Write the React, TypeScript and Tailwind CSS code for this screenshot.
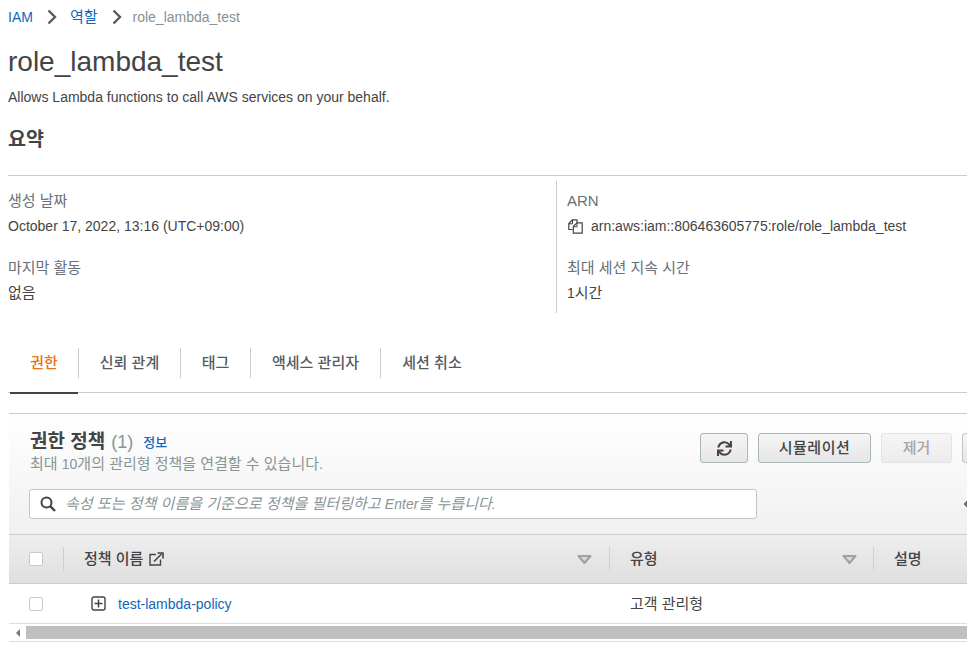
import React from 'react';
import { FaSync } from 'react-icons/fa';

const font = 'font-["Liberation_Sans","Noto_Sans_CJK_KR",sans-serif]';

const Chevron = () => (
  <svg width="10" height="16" viewBox="0 0 10 16" className="shrink-0">
    <path d="M1.5 1.5 L8 8 L1.5 14.5" fill="none" stroke="#545b64" strokeWidth="2.4" />
  </svg>
);

const SortArrow = () => (
  <svg width="15" height="9" viewBox="0 0 15 9" className="shrink-0">
    <path d="M1.5 1 H13.5 L7.5 8 Z" fill="#d8d8d8" stroke="#a0a0a0" strokeWidth="2" strokeLinejoin="round" />
  </svg>
);

const Checkbox = () => (
  <div className="h-[14px] w-[14px] shrink-0 rounded-[2px] border border-[#c9c9c9] bg-white" />
);

const ColDivider = () => <div className="h-[24px] w-px shrink-0 bg-[#cfcfcf]" />;

const Detail = ({ label, children }: { label: string; children: React.ReactNode }) => (
  <div className="h-[67px]">
    <div className="h-[25px] text-[15px] leading-[25px] text-[#687078]">{label}</div>
    <div className="flex h-[26px] items-center text-[14px] leading-[26px] text-[#444]">{children}</div>
  </div>
);

const tabs = [
  { name: '권한', width: 'w-[69px]', active: true },
  { name: '신뢰 관계', width: 'w-[102px]' },
  { name: '태그', width: 'w-[70px]' },
  { name: '액세스 관리자', width: 'w-[130px]' },
  { name: '세션 취소', width: 'w-[102px]' },
];

export default function App() {
  return (
    <div className={`${font} h-[645px] w-[967px] overflow-hidden bg-white pl-2 text-[#444]`}>
      {/* Breadcrumb */}
      <div className="flex h-[34px] items-center text-[14px]">
        <span className="text-[#1166bb]">IAM</span>
        <span className="ml-[14px] mr-[13px]"><Chevron /></span>
        <span className="text-[15px] text-[#1166bb]">역할</span>
        <span className="ml-[14px] mr-[11px]"><Chevron /></span>
        <span className="text-[#8a8f94]">role_lambda_test</span>
      </div>

      {/* Title */}
      <h1 className="mt-[10px] h-[36px] text-[28px] leading-[36px] font-normal text-[#444]">role_lambda_test</h1>
      <p className="mt-[7px] h-[20px] text-[14px] leading-[20px]">Allows Lambda functions to call AWS services on your behalf.</p>
      <h2 className="mt-[19px] h-[26px] text-[19.5px] leading-[26px] font-bold text-[#444]">요약</h2>

      {/* Summary */}
      <div className="mt-[23px] flex border-t border-[#ccc] pt-[5px]">
        <div className="h-[132px] w-[548px] shrink-0 pt-[7px]">
          <Detail label="생성 날짜">October 17, 2022, 13:16 (UTC+09:00)</Detail>
          <Detail label="마지막 활동"><span className="text-[15px]">없음</span></Detail>
        </div>
        <div className="h-[132px] flex-1 border-l border-[#ccc] pl-[10px] pt-[7px]">
          <Detail label="ARN">
            <svg width="15" height="15" viewBox="0 0 15 15" className="mr-[8px] ml-px shrink-0">
              <path d="M4.5 10.5H0.8V4.5L4.3 0.8H9V4" fill="none" stroke="#444" strokeWidth="1.2" />
              <path d="M4.5 1V4.8H1" fill="none" stroke="#444" strokeWidth="1" />
              <path d="M5.3 7.5L9 3.8H14.2V14.2H5.3Z" fill="white" stroke="#444" strokeWidth="1.2" />
              <path d="M9 4V7.8H5.5" fill="none" stroke="#444" strokeWidth="1" />
            </svg>
            arn:aws:iam::806463605775:role/role_lambda_test
          </Detail>
          <Detail label="최대 세션 지속 시간">1<span className="text-[15px]">시간</span></Detail>
        </div>
      </div>

      {/* Tabs */}
      <div className="mt-[35px] flex h-[45px] items-start border-b border-[#ccc] pl-[2px]">
        {tabs.map((t, i) => (
          <div
            key={t.name}
            className={`relative flex h-[45px] shrink-0 items-start justify-center ${t.width}`}
          >
            <div
              className={`flex h-[30px] w-full items-center justify-center pt-px text-[15px] font-medium ${i < tabs.length - 1 ? 'border-r border-[#ccc]' : ''} ${t.active ? 'text-[#ec7211]' : 'text-[#545b64]'}`}
            >
              {t.name}
            </div>
            {t.active && <div className="absolute bottom-[-1px] left-0 h-[2px] w-[68px] bg-[#444]" />}
          </div>
        ))}
      </div>

      {/* Policies panel */}
      <div className="mt-[20px] ml-px w-[1300px] border-t border-[#ccc]">
        <div className="h-[120px] bg-gradient-to-b from-[#ffffff] to-[#f0f0f0] pl-5">
          <div className="flex pt-[19px]">
            <div className="w-[671px] shrink-0">
              <div className="flex h-[18px] items-center pl-px pt-px">
                <span className="text-[19px] font-bold text-[#444]">권한 정책</span>
                <span className="ml-[6px] text-[18px] text-[#879596]">(1)</span>
                <span className="ml-[10px] pt-px text-[13px] font-medium text-[#1166bb]">정보</span>
              </div>
              <div className="mt-[4px] h-[18px] pl-px text-[15px] leading-[18px] text-[#879596]">
                최대 <span className="text-[14px]">10</span>개의 관리형 정책을 연결할 수 있습니다.
              </div>
            </div>
            <div className="flex gap-[10px]">
              <button className="flex h-[30px] w-[48px] items-center justify-center rounded-[3px] border border-[#aab7b8] bg-gradient-to-b from-[#f5f5f5] to-[#e6e6e6] text-[15px] text-[#444]">
                <FaSync />
              </button>
              <button className="h-[30px] w-[113px] rounded-[3px] border border-[#aab7b8] bg-gradient-to-b from-[#f5f5f5] to-[#e6e6e6] text-[15px] font-medium tracking-[0.5px] text-[#444]">시뮬레이션</button>
              <button className="h-[30px] w-[71px] rounded-[3px] border border-[#e3e3e3] bg-gradient-to-b from-[#f5f5f5] to-[#ececec] text-[15px] font-medium text-[#a5a5a5]">제거</button>
              <button className="h-[30px] w-[120px] rounded-[3px] border border-[#c4c4c4] bg-gradient-to-b from-[#f5f5f5] to-[#e6e6e6]" />
            </div>
          </div>
          <div className="mt-[16px] flex items-center">
            <div className="flex h-[30px] w-[728px] items-center rounded-[3px] border border-[#c6c6c6] bg-white pl-[10px]">
              <svg width="16" height="16" viewBox="0 0 16 16" className="shrink-0">
                <circle cx="6.5" cy="6.5" r="5" fill="none" stroke="#444" strokeWidth="2" />
                <path d="M10.2 10.2L15 15" stroke="#444" strokeWidth="2.4" />
              </svg>
              <span className="ml-[9px] text-[15px] tracking-[0.03px] text-[#879596] italic">
                속성 또는 정책 이름을 기준으로 정책을 필터링하고 <span className="text-[14px]">Enter</span>를 누릅니다.
              </span>
            </div>
            <svg width="6" height="10" viewBox="0 0 6 10" className="ml-[207px] shrink-0">
              <path d="M5 1L1 5L5 9" fill="none" stroke="#666" strokeWidth="2" />
            </svg>
          </div>
        </div>

        {/* Table header */}
        <div className="flex h-[50px] items-center border-y border-[#ccc] bg-gradient-to-b from-[#eeeeee] to-[#dfdfdf] text-[15px] font-medium text-[#444]">
          <div className="ml-5"><Checkbox /></div>
          <div className="ml-[20px]"><ColDivider /></div>
          <div className="ml-5 flex w-[508px] shrink-0 items-center">
            <span>정책 이름</span>
            <svg width="15" height="14" viewBox="0 0 15 14" className="ml-[6px] shrink-0">
              <path d="M7 2.5H1V13H11.5V7.5" fill="none" stroke="#444" strokeWidth="1.4" />
              <path d="M5 9.5L12.5 2" stroke="#444" strokeWidth="1.6" />
              <path d="M8.5 1H14V6.5" fill="none" stroke="#444" strokeWidth="1.6" />
            </svg>
            <span className="ml-auto"><SortArrow /></span>
          </div>
          <div className="ml-[17px]"><ColDivider /></div>
          <div className="ml-5 flex w-[227px] shrink-0 items-center">
            <span>유형</span>
            <span className="ml-auto"><SortArrow /></span>
          </div>
          <div className="ml-[16px]"><ColDivider /></div>
          <div className="ml-5">설명</div>
        </div>

        {/* Table row */}
        <div className="flex h-[40px] items-center border-b border-[#ddd] bg-white text-[14px]">
          <div className="ml-5"><Checkbox /></div>
          <svg width="15" height="15" viewBox="0 0 15 15" className="ml-[48px] shrink-0">
            <rect x="1" y="1" width="13" height="13" rx="2" fill="none" stroke="#444" strokeWidth="1.4" />
            <path d="M7.5 3.5V11.5M3.5 7.5H11.5" stroke="#444" strokeWidth="1.5" />
          </svg>
          <span className="ml-[12px] w-[512px] shrink-0 pt-[2px] text-[#1166bb]">test-lambda-policy</span>
          <span className="pt-[2px] text-[15px]">고객 관리형</span>
        </div>

        {/* Horizontal scrollbar */}
        <div className="mt-[2px] flex h-[13px] items-center">
          <div className="flex w-[17px] shrink-0 justify-center">
            <div className="h-0 w-0 border-y-[4px] border-r-[4px] border-y-transparent border-r-[#777]" />
          </div>
          <div className="h-[13px] flex-1 bg-[#bfbfbf]" />
        </div>
        <div className="mt-[2px] h-px bg-[#ddd]" />
      </div>
    </div>
  );
}
